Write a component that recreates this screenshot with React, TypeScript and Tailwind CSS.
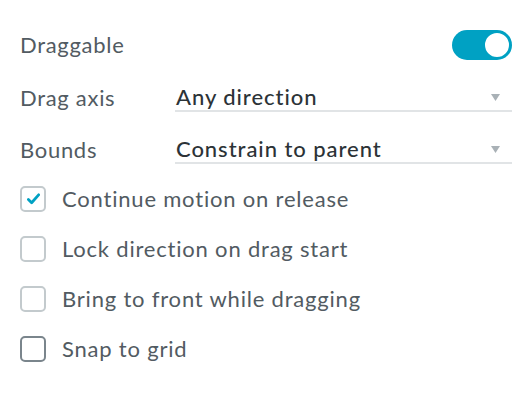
import React from "react";

const options = [
  { label: "Continue motion on release", checked: true, hover: false },
  { label: "Lock direction on drag start", checked: false, hover: false },
  { label: "Bring to front while dragging", checked: false, hover: false },
  { label: "Snap to grid", checked: false, hover: true },
];

const SelectRow = ({ label, value }: { label: string; value: string }) => (
  <div className="flex items-center mt-[24px] h-[28px]">
    <div className="w-[155px] text-[22px] leading-[28px] tracking-[0.7px] text-[#525b62]">{label}</div>
    <div className="flex-1 h-[28px] flex items-center justify-between border-b-2 border-[#e1e4e6] pl-[1px] pr-[12px]">
      <span className="text-[22px] leading-[28px] tracking-[0.95px] font-medium text-[#2c3337]">{value}</span>
      <svg width="9" height="7" viewBox="0 0 9 7">
        <path d="M0 0H9L4.5 7Z" fill="#a9b1b6" />
      </svg>
    </div>
  </div>
);

export default function App() {
  return (
    <div className="w-[532px] h-[408px] bg-white px-5 pt-[30px] font-['Lato',sans-serif]">
      {/* Draggable toggle */}
      <div className="flex items-center justify-between h-[30px]">
        <span className="text-[22px] leading-[28px] tracking-[0.7px] text-[#525b62]">Draggable</span>
        <div className="w-[60px] h-[30px] rounded-full bg-[#00a1c3] p-[1px] flex justify-end">
          <div className="w-[28px] h-[28px] rounded-full bg-white border-2 border-[#00a1c3]"></div>
        </div>
      </div>

      <SelectRow label="Drag axis" value="Any direction" />
      <SelectRow label="Bounds" value="Constrain to parent" />

      {/* Checkbox options */}
      <div className="flex flex-col gap-[24px] mt-[22px]">
        {options.map((opt) => (
          <div key={opt.label} className="flex items-center h-[26px]">
            <div
              className={
                "w-[26px] h-[26px] rounded-[5px] border-2 flex items-center justify-center " +
                (opt.hover ? "border-[#7a858c]" : "border-[#c3cacd]")
              }
            >
              {opt.checked && (
                <svg width="13" height="12" viewBox="0 0 14 12">
                  <path d="M1.5 6.5L5 10L12.5 1.5" fill="none" stroke="#00a1c3" strokeWidth="3" strokeLinecap="round" strokeLinejoin="round" />
                </svg>
              )}
            </div>
            <span className="ml-[16px] text-[22px] leading-[28px] tracking-[0.8px] text-[#525b62]">{opt.label}</span>
          </div>
        ))}
      </div>
    </div>
  );
}
